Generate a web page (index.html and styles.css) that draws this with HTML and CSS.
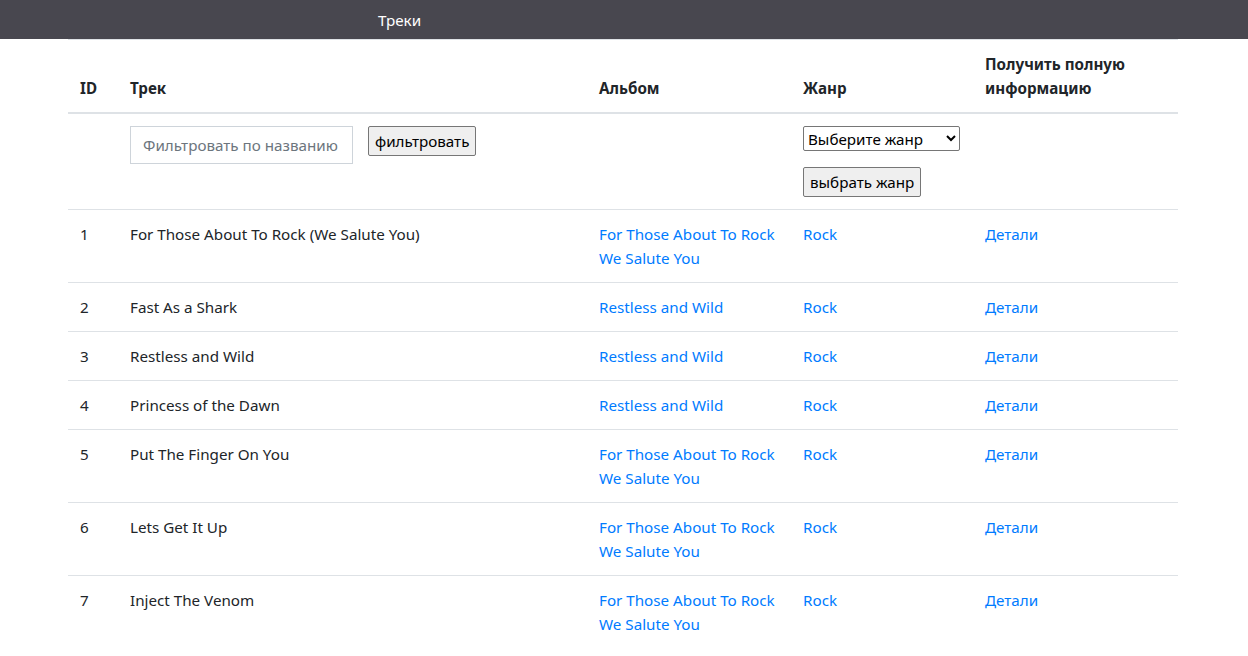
FILE: index.html
```html
<!DOCTYPE html>
<html lang="ru">
<head>
<meta charset="utf-8">
<title>Треки</title>
<link rel="stylesheet" href="styles.css">
</head>
<body>
<header class="navbar">
  <span class="nav-title">Треки</span>
</header>
<main class="container">
  <table class="tracks">
    <colgroup>
      <col class="c-id"><col class="c-track"><col class="c-album"><col class="c-genre"><col class="c-info">
    </colgroup>
    <thead>
      <tr>
        <th>ID</th>
        <th>Трек</th>
        <th>Альбом</th>
        <th>Жанр</th>
        <th>Получить полную информацию</th>
      </tr>
    </thead>
    <tbody>
      <tr class="filters">
        <td></td>
        <td>
          <div class="filter-name">
            <input class="form-control" type="text" placeholder="Фильтровать по названию">
            <button type="button" class="btn">фильтровать</button>
          </div>
        </td>
        <td></td>
        <td>
          <div class="filter-genre">
            <select class="genre-select"><option>Выберите жанр</option></select>
            <button type="button" class="btn">выбрать жанр</button>
          </div>
        </td>
        <td></td>
      </tr>
      <tr><td>1</td><td>For Those About To Rock (We Salute You)</td><td><a href="#">For Those About To Rock We Salute You</a></td><td><a href="#">Rock</a></td><td><a href="#">Детали</a></td></tr>
      <tr><td>2</td><td>Fast As a Shark</td><td><a href="#">Restless and Wild</a></td><td><a href="#">Rock</a></td><td><a href="#">Детали</a></td></tr>
      <tr><td>3</td><td>Restless and Wild</td><td><a href="#">Restless and Wild</a></td><td><a href="#">Rock</a></td><td><a href="#">Детали</a></td></tr>
      <tr><td>4</td><td>Princess of the Dawn</td><td><a href="#">Restless and Wild</a></td><td><a href="#">Rock</a></td><td><a href="#">Детали</a></td></tr>
      <tr><td>5</td><td>Put The Finger On You</td><td><a href="#">For Those About To Rock We Salute You</a></td><td><a href="#">Rock</a></td><td><a href="#">Детали</a></td></tr>
      <tr><td>6</td><td>Lets Get It Up</td><td><a href="#">For Those About To Rock We Salute You</a></td><td><a href="#">Rock</a></td><td><a href="#">Детали</a></td></tr>
      <tr><td>7</td><td>Inject The Venom</td><td><a href="#">For Those About To Rock We Salute You</a></td><td><a href="#">Rock</a></td><td><a href="#">Детали</a></td></tr>
    </tbody>
  </table>
</main>
</body>
</html>
```

FILE: styles.css
```css
* { box-sizing: border-box; }
html, body { margin: 0; padding: 0; }
body {
  font-family: "Noto Sans", "Liberation Sans", sans-serif;
  font-size: 15.2px;
  line-height: 24px;
  color: #212529;
  background: #fff;
}
.navbar {
  height: 39px;
  background: #48474f;
  display: flex;
  align-items: center;
  padding-left: 378px;
}
.nav-title {
  color: #fff;
  line-height: 24px;
}
.container {
  width: 1110px;
  margin: 0 70px 0 68px;
}
.tracks {
  width: 100%;
  border-collapse: collapse;
  table-layout: fixed;
}
.c-id { width: 50px; }
.c-track { width: 469px; }
.c-album { width: 204px; }
.c-genre { width: 182px; }
.c-info { width: 205px; }
.tracks th, .tracks td {
  padding: 12px;
  text-align: left;
  vertical-align: top;
  border-top: 1px solid #dee2e6;
}
.tracks th {
  vertical-align: bottom;
  font-weight: 700;
  border-bottom: 2px solid #dee2e6;
}
.tracks a {
  color: #007bff;
  text-decoration: none;
}
.filter-name {
  display: flex;
  align-items: flex-start;
  gap: 15px;
}
.form-control {
  width: 223px;
  height: 38px;
  padding: 6px 12px;
  font-family: inherit;
  font-size: 15.2px;
  line-height: 24px;
  color: #495057;
  border: 1px solid #ced4da;
  border-radius: 0;
  background: #fff;
}
.form-control::placeholder { color: #6c757d; }
.btn {
  font-family: inherit;
  font-size: 15.2px;
  line-height: 24px;
  color: #000;
  background: #efefef;
  border: 1px solid #767676;
  border-radius: 2px;
  padding: 2px 6px;
  height: 30px;
}
.filter-genre {
  display: flex;
  flex-direction: column;
  align-items: flex-start;
  gap: 16px;
}
.genre-select {
  width: 157px;
  height: 25px;
  font-family: inherit;
  font-size: 15.2px;
  color: #000;
  border: 1px solid #767676;
  border-radius: 2px;
  background: #fff;
}
```
